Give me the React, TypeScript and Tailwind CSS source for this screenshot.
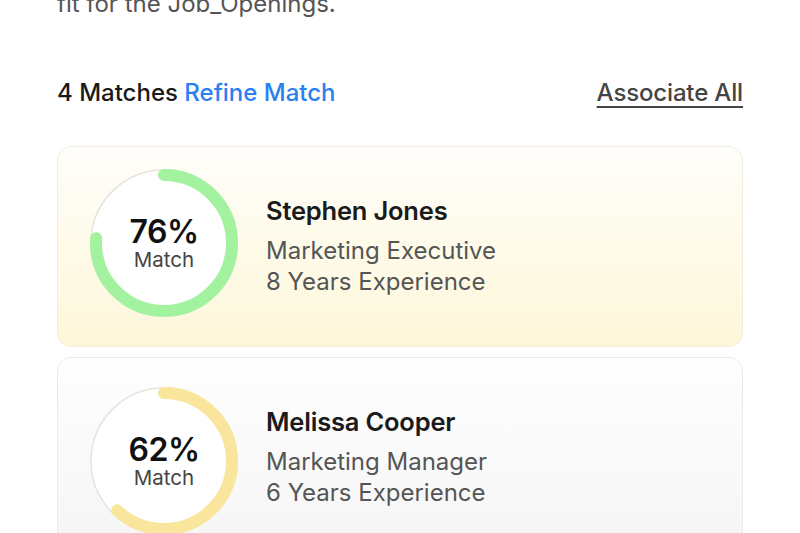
import React from "react";

type Match = {
  pct: number;
  name: string;
  role: string;
  exp: string;
  color: string;
  card: string;
  circleMt: string;
};

const matches: Match[] = [
  {
    pct: 76,
    name: "Stephen Jones",
    role: "Marketing Executive",
    exp: "8 Years Experience",
    color: "#a3f29f",
    card: "bg-gradient-to-b from-[#fffefa] to-[#fdf7d9] border-[#f1eed9]",
    circleMt: "mt-[21px]",
  },
  {
    pct: 62,
    name: "Melissa Cooper",
    role: "Marketing Manager",
    exp: "6 Years Experience",
    color: "#f9e69c",
    card: "bg-gradient-to-b from-[#fefefe] to-[#f5f5f5] border-[#ebebeb]",
    circleMt: "mt-[28px]",
  },
];

function Ring({ pct, color }: { pct: number; color: string }) {
  const r = 68;
  const c = 2 * Math.PI * r;
  return (
    <div className="relative w-[150px] h-[150px] shrink-0">
      <svg width="150" height="150" viewBox="0 0 150 150" className="absolute inset-0">
        <circle cx="75" cy="75" r="73" fill="#ffffff" stroke="#e6e5dc" strokeWidth="1.5" />
        <circle
          cx="75"
          cy="75"
          r={r}
          fill="none"
          stroke={color}
          strokeWidth="12"
          strokeLinecap="round"
          strokeDasharray={`${(c * pct) / 100} ${c}`}
          transform="rotate(-90 75 75)"
        />
      </svg>
      <div className="absolute inset-0 flex flex-col items-center justify-center">
        <div className="text-[32px] leading-[34px] font-semibold text-[#111] tracking-[-0.5px]">{pct}%</div>
        <div className="text-[20.5px] leading-[22px] text-[#444]">Match</div>
      </div>
    </div>
  );
}

export default function App() {
  return (
    <div
      className="w-[800px] h-[533px] overflow-hidden bg-white"
      style={{ fontFamily: "Inter, 'Noto Sans', sans-serif" }}
    >
      <div className="pl-[57px] pr-[57px]">
        <div className="-mt-[12px] text-[24px] leading-[32px] text-[#555]">fit for the Job_Openings.</div>
        <div className="mt-[59px] flex items-center justify-between h-[28px]">
          <div className="text-[24px] font-medium text-[#1a1a1a]">
            4 Matches <span className="text-[#2a80ef]">Refine Match</span>
          </div>
          <div className="text-[24px] font-medium text-[#444] underline underline-offset-[5px] decoration-[2px] tracking-[-0.15px]">
            Associate All
          </div>
        </div>
        <div className="mt-[39px] flex flex-col gap-[10px]">
          {matches.map((m) => (
            <div
              key={m.name}
              className={`h-[201px] rounded-[14px] border-[1.5px] ${m.card} flex items-start pl-[31px] shrink-0`}
            >
              <div className={m.circleMt}>
                <Ring pct={m.pct} color={m.color} />
              </div>
              <div className="ml-[27px] mt-[48px] flex flex-col">
                <div className="text-[25.5px] leading-[31px] font-semibold text-[#1a1a1a] tracking-[-0.2px]">{m.name}</div>
                <div className="mt-[9px] text-[24px] leading-[31px] text-[#555]">{m.role}</div>
                <div className="text-[24px] leading-[31px] text-[#555]">{m.exp}</div>
              </div>
            </div>
          ))}
        </div>
      </div>
    </div>
  );
}
